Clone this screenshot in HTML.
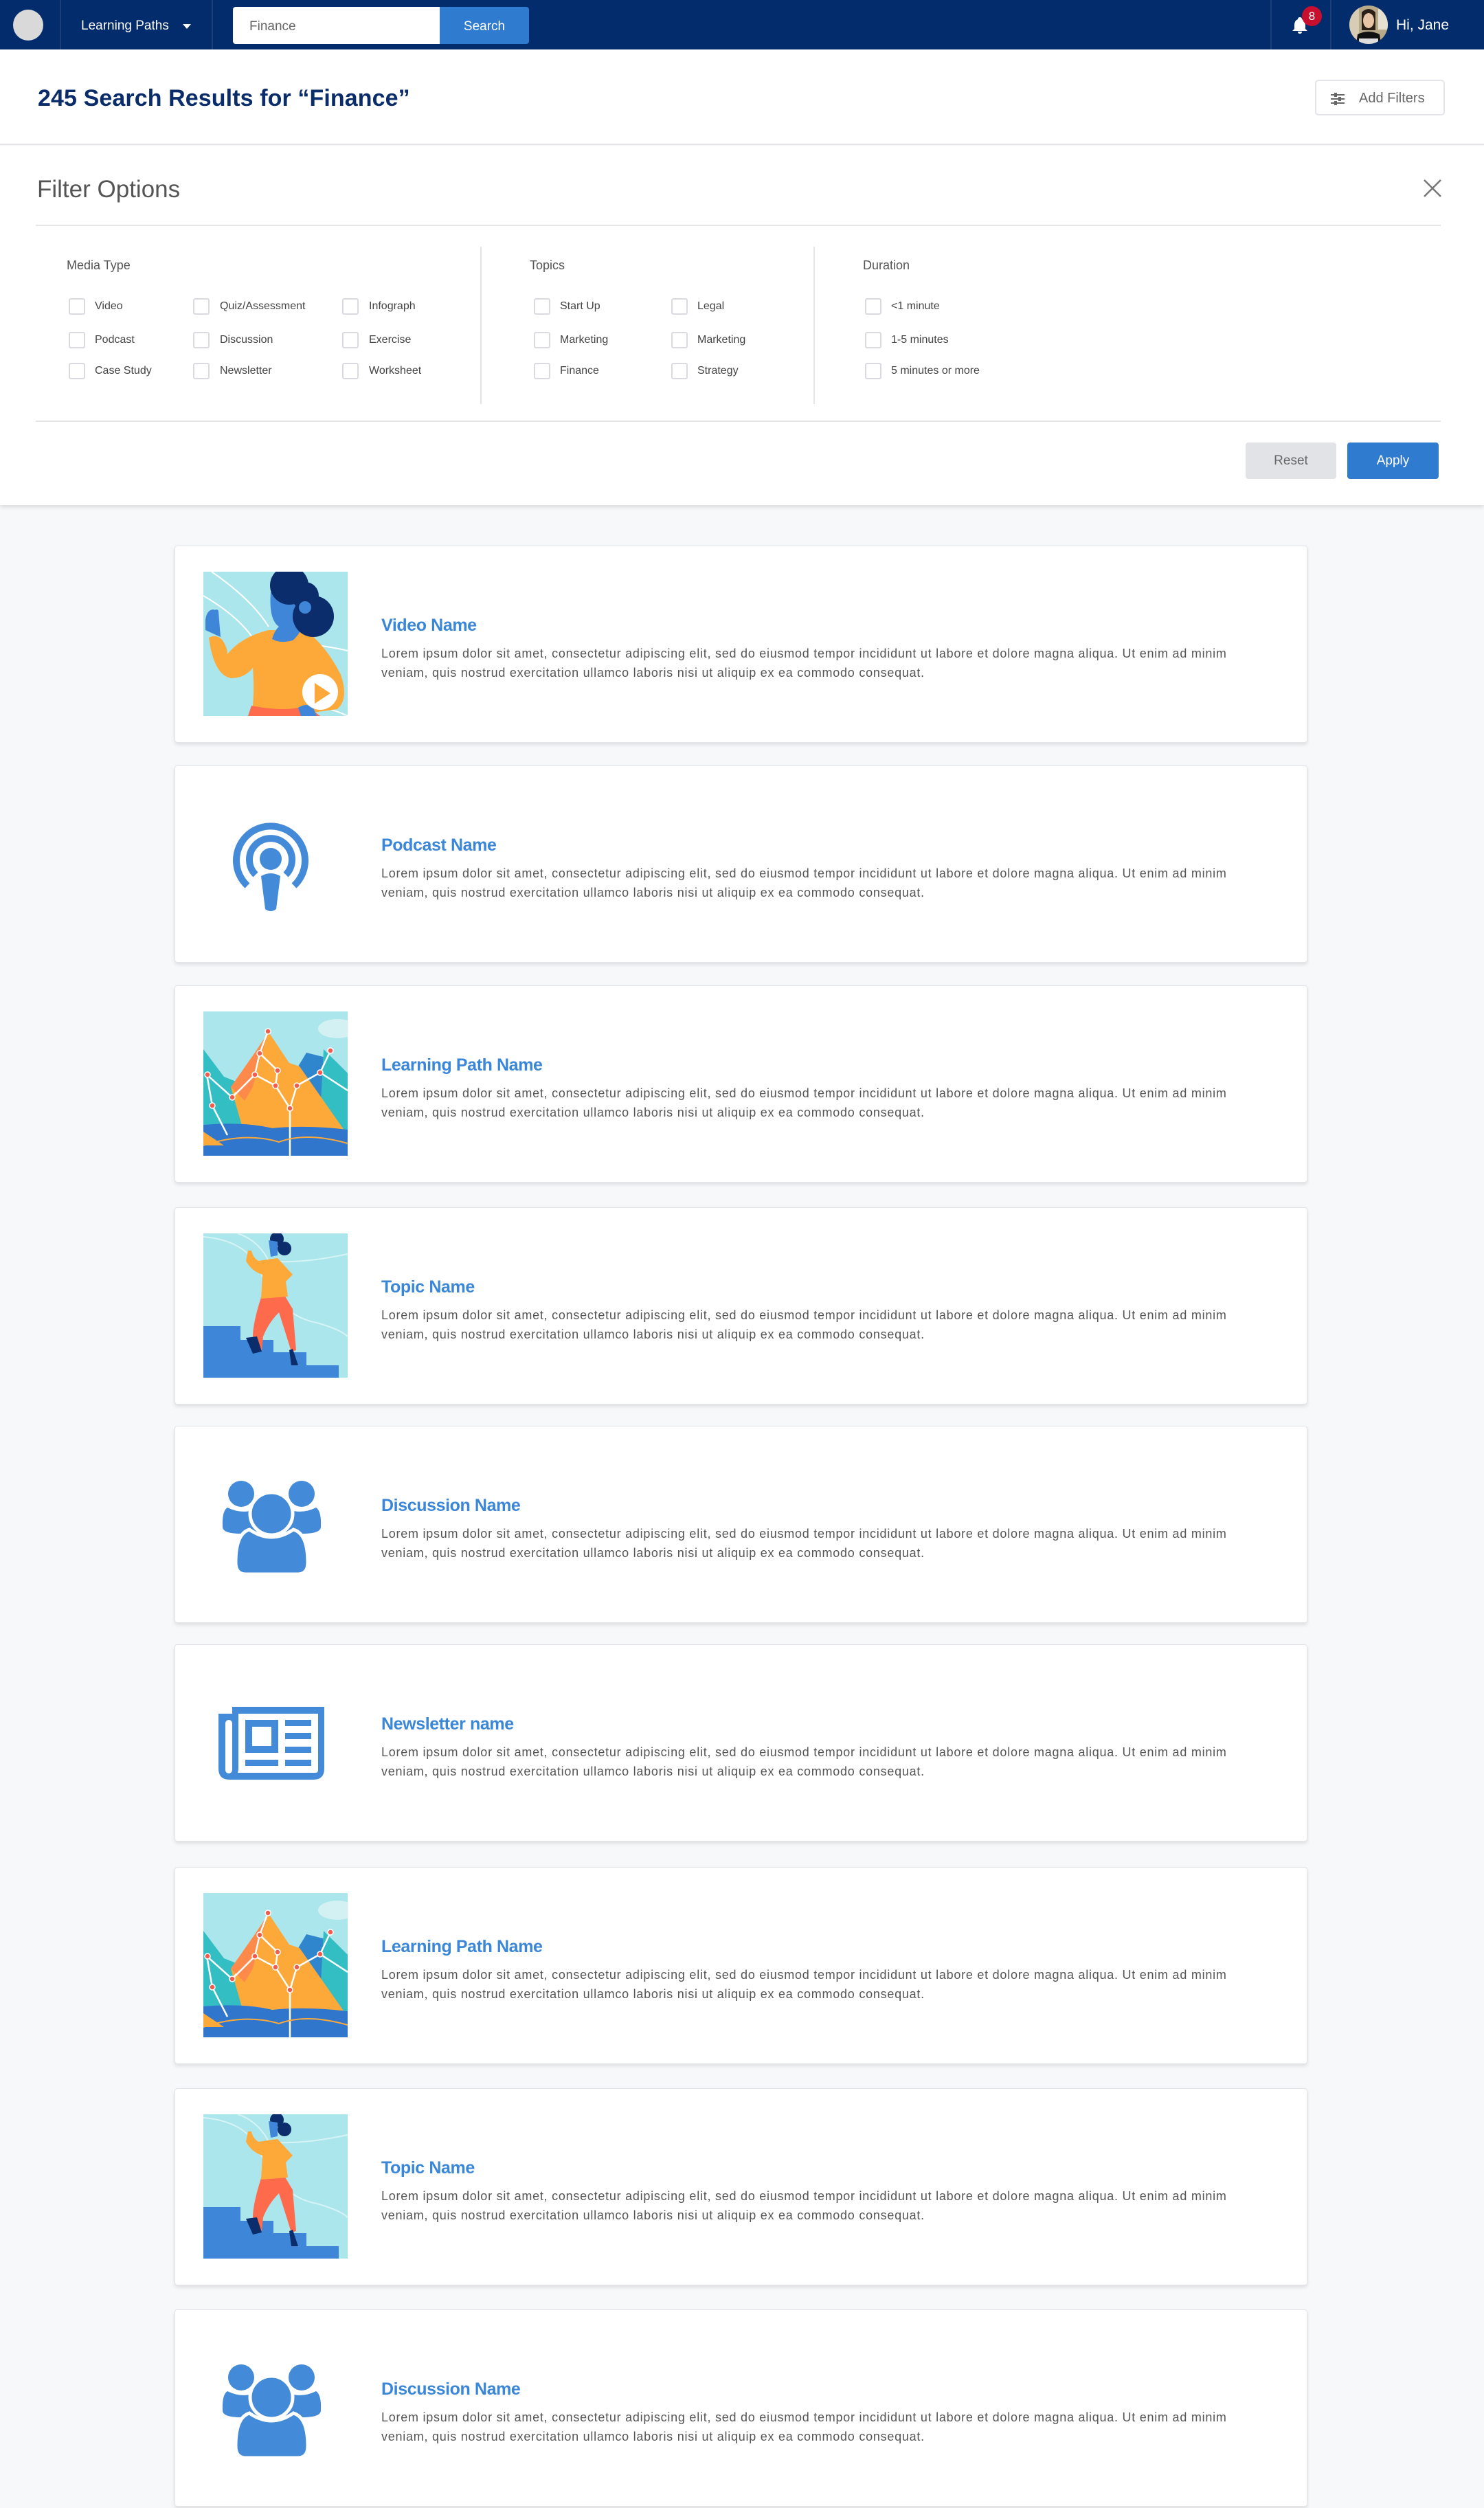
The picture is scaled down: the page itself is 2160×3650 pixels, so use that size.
<!DOCTYPE html>
<html><head><meta charset="utf-8">
<style>
*{margin:0;padding:0;box-sizing:border-box}
body{width:2160px;height:3650px;background:#f7f8fa;font-family:"Liberation Sans",Arial,sans-serif;position:relative;overflow:hidden}
.a{position:absolute}
.nav{left:0;top:0;width:2160px;height:72px;background:#022c6b}
.vd{position:absolute;top:0;width:2px;height:72px;background:#1d3f78}
.hdr{left:0;top:72px;width:2160px;height:139px;background:#fff;border-bottom:2px solid #e6e7ea}
.panel{left:0;top:212px;width:2160px;height:523px;background:#fff;box-shadow:0 3px 6px rgba(0,0,0,.12)}
.cb{position:absolute;width:24px;height:24px;border:2px solid #d9dbe0;border-radius:3px;background:#fff}
.lb{position:absolute;font-size:16px;color:#444;line-height:20px;white-space:nowrap}
.ch{position:absolute;font-size:18px;color:#555;line-height:22px}
.card{position:absolute;left:254px;width:1649px;height:287px;background:#fff;border:1px solid #e3e4e8;border-radius:4px;box-shadow:0 3px 6px rgba(0,0,0,.10)}
.card svg.ill{position:absolute;left:41px;top:37px;width:210px;height:210px}
.card .t{position:absolute;left:300px;top:101px;font-size:25px;color:#3a86d8;font-weight:bold;letter-spacing:-0.4px;white-space:nowrap}
.card .d{position:absolute;left:300px;top:142px;font-size:18px;line-height:28px;color:#555;white-space:nowrap;letter-spacing:0.75px}
</style></head><body>
<svg width="0" height="0" style="position:absolute">
<defs>
<symbol id="video" viewBox="0 0 210 210">
<rect width="210" height="210" fill="#abe6ec"/>
<path d="M12 0 Q70 40 95 80" stroke="#fff" stroke-width="2" fill="none"/>
<path d="M0 35 Q60 70 80 110 M150 105 Q190 110 210 115 M160 195 Q190 200 210 210" stroke="#fff" stroke-width="2" fill="none"/>
<path d="M3 85 L3 70 Q5 55 15 55 L22 58 L25 95 Z" fill="#3f86d8"/>
<rect x="16" y="55" width="6" height="25" rx="3" fill="#3f86d8"/>
<path d="M8 96 Q20 90 28 100 Q35 110 35 120 Q55 95 95 85 L150 86 Q180 110 200 150 Q212 185 195 200 L160 205 L155 210 L70 210 Q75 180 72 140 Q60 155 40 155 Q15 150 8 96 Z" fill="#fda93a"/>
<path d="M98 30 L145 28 L150 70 Q140 92 130 100 Q112 105 100 98 Q104 85 110 80 Q95 70 98 30 Z" fill="#3f86d8"/>
<circle cx="125" cy="20" r="28" fill="#0b2d6b"/>
<circle cx="160" cy="65" r="30" fill="#0b2d6b"/>
<circle cx="148" cy="35" r="20" fill="#0b2d6b"/>
<circle cx="148" cy="52" r="9" fill="#3f86d8"/>
<path d="M70 195 Q120 205 150 195 L170 210 L65 210 Z" fill="#fe6b4c"/>
<path d="M138 198 Q150 190 160 198 L165 210 L142 210 Z" fill="#3f86d8"/>
<circle cx="170" cy="175" r="26" fill="#fff"/>
<path d="M162 162 L185 177 L162 192 Z" fill="#fda93a"/>
</symbol>
<symbol id="mountain" viewBox="0 0 210 210">
<rect width="210" height="210" fill="#abe6ec"/>
<ellipse cx="195" cy="25" rx="28" ry="14" fill="#d3f1f3"/>
<path d="M0 55 L30 95 L55 105 L105 170 L0 180 Z" fill="#33bec3"/>
<path d="M150 60 L190 70 L210 90 L210 190 L130 190 L120 110 Z" fill="#2f86cc"/>
<path d="M175 55 L210 90 L210 180 L170 150 Z" fill="#33bec3"/>
<path d="M40 110 L75 60 L95 30 L125 75 L140 80 L210 180 L60 180 Z" fill="#fda93a"/>
<path d="M40 110 L75 60 L95 30 L82 70 L72 110 L60 130 Z" fill="#fd8a4a"/>
<path d="M0 165 Q60 160 100 170 Q150 165 210 172 L210 210 L0 210 Z" fill="#2f76cc"/>
<path d="M0 175 L30 195 L0 195 Z" fill="#fda93a"/>
<path d="M5 92 L42 125 L75 92 L105 108 L126 141 L126 210 M126 141 L136 108 L170 89 L185 57 M170 89 L210 115 M5 92 L13 137 L35 180 M75 92 L82 61 L94 29 M82 61 L108 86 L105 108 M42 125 L48 118" stroke="#fff" stroke-width="2.5" fill="none"/>
<path d="M0 195 Q60 175 110 190 Q150 175 210 192" stroke="#fda93a" stroke-width="2" fill="none"/>
<g fill="#f25c4d" stroke="#fff" stroke-width="1.5"><circle cx="6" cy="92" r="4"/><circle cx="42" cy="125" r="4"/><circle cx="75" cy="92" r="4"/><circle cx="82" cy="61" r="4"/><circle cx="94" cy="29" r="4"/><circle cx="108" cy="86" r="4"/><circle cx="105" cy="108" r="4"/><circle cx="126" cy="141" r="4"/><circle cx="136" cy="108" r="4"/><circle cx="170" cy="89" r="4"/><circle cx="185" cy="57" r="4"/><circle cx="13" cy="137" r="4"/></g>
</symbol>
<symbol id="topic" viewBox="0 0 210 210">
<rect width="210" height="210" fill="#abe6ec"/>
<path d="M0 5 Q60 10 80 50 Q110 120 165 130 Q200 140 210 150 M50 0 Q80 10 95 40 Q140 45 210 30" stroke="#d6f3f5" stroke-width="2" fill="none"/>
<path d="M0 135 L54 135 L54 155 L102 155 L102 173 L150 173 L150 192 L197 192 L197 210 L0 210 Z" fill="#3e87d8"/>
<path d="M85 90 L115 85 L130 110 L135 170 L128 172 Q115 130 110 115 Q95 130 87 150 L85 170 L75 170 L72 150 Q72 130 85 90 Z" fill="#fe6b4c"/>
<path d="M80 40 L108 36 L130 60 L120 70 L123 92 L84 95 L86 60 Q70 55 62 40 L65 25 L70 25 Q72 35 80 40 Z" fill="#fda93a"/>
<circle cx="107" cy="8" r="10" fill="#0b2d6b"/><circle cx="118" cy="22" r="10" fill="#0b2d6b"/>
<path d="M95 10 L108 12 L108 32 L98 34 Z" fill="#3f86d8"/>
<path d="M62 152 L72 175 L85 172 L78 150 Z M130 168 L138 192 L128 192 L125 170Z" fill="#0b2d6b"/>
</symbol>
<symbol id="podcast" viewBox="0 0 116 134">
<path d="M24 96 A50 50 0 1 1 92 96" stroke="#438ad8" stroke-width="10" fill="none"/>
<path d="M36 80 A31 31 0 1 1 80 80" stroke="#438ad8" stroke-width="10" fill="none"/>
<circle cx="58" cy="57" r="16" fill="#438ad8"/>
<path d="M44 82 Q58 74 72 82 L66 130 Q58 136 50 130 Z" fill="#438ad8"/>
</symbol>
<symbol id="disc" viewBox="0 0 145 137">
<circle cx="28" cy="20" r="19" fill="#438ad8"/><circle cx="116" cy="20" r="19" fill="#438ad8"/>
<path d="M8 40 Q28 50 48 43 L60 75 L28 78 Q1 78 1 68 Q0 45 8 40 Z" fill="#438ad8"/>
<path d="M137 40 Q117 50 97 43 L85 75 L117 78 Q144 78 144 68 Q145 45 137 40 Z" fill="#438ad8"/>
<circle cx="72" cy="49" r="31" fill="#438ad8" stroke="#fff" stroke-width="5"/>
<path d="M40 72 Q72 94 104 72 Q125 78 125 120 Q125 137 110 137 L35 137 Q20 137 20 120 Q20 78 40 72 Z" fill="#438ad8" stroke="#fff" stroke-width="5"/>
</symbol>
<symbol id="news" viewBox="0 0 154 106">
<path d="M20 0 L154 0 L154 90 Q154 106 138 106 L16 106 Q0 106 0 90 L0 10 L20 10 Z" fill="#438ad8"/>
<rect x="10" y="19" width="10" height="78" rx="5" fill="#fff"/>
<path d="M29 10 L145 10 L145 92 Q145 96 141 96 L28 96 Q29 93 29 90 Z" fill="#fff"/>
<rect x="39" y="19" width="48" height="48" fill="#438ad8"/><rect x="49" y="29" width="28" height="28" fill="#fff"/>
<g fill="#438ad8"><rect x="97" y="19" width="38" height="9"/><rect x="97" y="38" width="38" height="9"/><rect x="97" y="58" width="38" height="9"/><rect x="97" y="77" width="38" height="9"/><rect x="39" y="77" width="48" height="9"/></g>
</symbol>
</defs></svg>

<div class="a nav">
  <div class="a" style="left:19px;top:14px;width:44px;height:45px;border-radius:50%;background:#d9d9d9"></div>
  <div class="vd" style="left:87px"></div>
  <div class="a" style="left:118px;top:27px;font-size:19px;color:#fff;white-space:nowrap">Learning Paths</div>
  <div class="a" style="left:266px;top:35px;width:0;height:0;border-left:6px solid transparent;border-right:6px solid transparent;border-top:7px solid #fff"></div>
  <div class="vd" style="left:308px"></div>
  <div class="a" style="left:339px;top:10px;width:301px;height:54px;background:#fff;border-radius:4px 0 0 4px;font-size:19px;color:#666;padding:18px 0 0 24px">Finance</div>
  <div class="a" style="left:640px;top:10px;width:130px;height:54px;background:#2f7bd0;border-radius:0 4px 4px 0;font-size:19px;color:#fff;text-align:center;padding-top:18px">Search</div>
  <div class="vd" style="left:1849px"></div>
  <svg class="a" style="left:1880px;top:24px" width="24" height="26" viewBox="0 0 24 26"><path d="M12 1 Q15 1 15 4 Q20 6 20 13 L20 18 L23 21 L1 21 L4 18 L4 13 Q4 6 9 4 Q9 1 12 1 Z M9 22 L15 22 Q15 25 12 25 Q9 25 9 22Z" fill="#fff"/></svg>
  <div class="a" style="left:1895px;top:9px;width:29px;height:29px;border-radius:50%;background:#c8102e;color:#fff;font-size:17px;text-align:center;line-height:29px">8</div>
  <div class="vd" style="left:1936px"></div>
  <svg class="a" style="left:1964px;top:8px" width="56" height="56" viewBox="0 0 56 56"><clipPath id="av"><circle cx="28" cy="28" r="28"/></clipPath><g clip-path="url(#av)"><rect width="56" height="56" fill="#b8a98a"/><rect x="0" y="0" width="14" height="56" fill="#d8cdb4"/><rect x="42" y="5" width="14" height="30" fill="#e6e0d2"/><path d="M18 10 Q28 0 38 10 L38 36 L18 36Z" fill="#2a2018"/><ellipse cx="28" cy="22" rx="8" ry="11" fill="#e8c4a6"/><path d="M10 56 L12 42 Q28 34 44 42 L46 56Z" fill="#111"/><rect x="14" y="48" width="28" height="8" fill="#ddd"/></g></svg>
  <div class="a" style="left:2032px;top:25px;font-size:21px;color:#fff;white-space:nowrap">Hi, Jane</div>
</div>

<div class="a hdr">
  <div class="a" style="left:55px;top:52px;font-size:34px;font-weight:bold;color:#0a2c6b;letter-spacing:0.1px;white-space:nowrap">245 Search Results for “Finance”</div>
  <div class="a" style="left:1914px;top:44px;width:189px;height:52px;border:2px solid #e3e5ea;border-radius:5px;background:#fff">
    <svg class="a" style="left:21px;top:16px" width="20" height="20" viewBox="0 0 20 20"><g stroke="#666" stroke-width="2"><line x1="0" y1="4" x2="20" y2="4"/><line x1="0" y1="10" x2="20" y2="10"/><line x1="0" y1="16" x2="20" y2="16"/></g><g fill="#666"><rect x="5" y="1" width="4" height="6"/><rect x="11" y="7" width="4" height="6"/><rect x="5" y="13" width="4" height="6"/></g></svg>
    <div class="a" style="left:62px;top:14px;font-size:20px;color:#666;white-space:nowrap">Add Filters</div>
  </div>
</div>

<div class="a panel">
  <div class="a" style="left:54px;top:44px;font-size:35px;color:#555;white-space:nowrap">Filter Options</div>
  <svg class="a" style="left:2071px;top:48px" width="28" height="28" viewBox="0 0 28 28"><path d="M2 2 L26 26 M26 2 L2 26" stroke="#777" stroke-width="2.5"/></svg>
  <div class="a" style="left:52px;top:115px;width:2045px;height:2px;background:#e4e5e8"></div>
  <div class="a" style="left:699px;top:147px;width:2px;height:229px;background:#e4e5e8"></div>
  <div class="a" style="left:1184px;top:147px;width:2px;height:229px;background:#e4e5e8"></div>
  <div class="ch" style="left:97px;top:163px">Media Type</div>
  <div class="ch" style="left:771px;top:163px">Topics</div>
  <div class="ch" style="left:1256px;top:163px">Duration</div>

  <div class="cb" style="left:100px;top:222px"></div><div class="lb" style="left:138px;top:224px">Video</div>
  <div class="cb" style="left:281px;top:222px"></div><div class="lb" style="left:320px;top:224px">Quiz/Assessment</div>
  <div class="cb" style="left:498px;top:222px"></div><div class="lb" style="left:537px;top:224px">Infograph</div>
  <div class="cb" style="left:100px;top:271px"></div><div class="lb" style="left:138px;top:273px">Podcast</div>
  <div class="cb" style="left:281px;top:271px"></div><div class="lb" style="left:320px;top:273px">Discussion</div>
  <div class="cb" style="left:498px;top:271px"></div><div class="lb" style="left:537px;top:273px">Exercise</div>
  <div class="cb" style="left:100px;top:316px"></div><div class="lb" style="left:138px;top:318px">Case Study</div>
  <div class="cb" style="left:281px;top:316px"></div><div class="lb" style="left:320px;top:318px">Newsletter</div>
  <div class="cb" style="left:498px;top:316px"></div><div class="lb" style="left:537px;top:318px">Worksheet</div>

  <div class="cb" style="left:777px;top:222px"></div><div class="lb" style="left:815px;top:224px">Start Up</div>
  <div class="cb" style="left:977px;top:222px"></div><div class="lb" style="left:1015px;top:224px">Legal</div>
  <div class="cb" style="left:777px;top:271px"></div><div class="lb" style="left:815px;top:273px">Marketing</div>
  <div class="cb" style="left:977px;top:271px"></div><div class="lb" style="left:1015px;top:273px">Marketing</div>
  <div class="cb" style="left:777px;top:316px"></div><div class="lb" style="left:815px;top:318px">Finance</div>
  <div class="cb" style="left:977px;top:316px"></div><div class="lb" style="left:1015px;top:318px">Strategy</div>

  <div class="cb" style="left:1259px;top:222px"></div><div class="lb" style="left:1297px;top:224px">&lt;1 minute</div>
  <div class="cb" style="left:1259px;top:271px"></div><div class="lb" style="left:1297px;top:273px">1-5 minutes</div>
  <div class="cb" style="left:1259px;top:316px"></div><div class="lb" style="left:1297px;top:318px">5 minutes or more</div>

  <div class="a" style="left:52px;top:400px;width:2045px;height:2px;background:#e4e5e8"></div>
  <div class="a" style="left:1813px;top:432px;width:132px;height:53px;background:#e2e3e6;border-radius:4px;font-size:19px;color:#666;text-align:center;line-height:53px">Reset</div>
  <div class="a" style="left:1961px;top:432px;width:133px;height:53px;background:#2f7bd0;border-radius:4px;font-size:19px;color:#fff;text-align:center;line-height:53px">Apply</div>
</div>

<div class="card" style="top:794px"><svg class="ill"><use href="#video"/></svg><div class="t">Video Name</div><div class="d">Lorem ipsum dolor sit amet, consectetur adipiscing elit, sed do eiusmod tempor incididunt ut labore et dolore magna aliqua. Ut enim ad minim<br>veniam, quis nostrud exercitation ullamco laboris nisi ut aliquip ex ea commodo consequat.</div></div>
<div class="card" style="top:1114px"><svg class="a" style="left:81px;top:78px" width="116" height="134"><use href="#podcast"/></svg><div class="t">Podcast Name</div><div class="d">Lorem ipsum dolor sit amet, consectetur adipiscing elit, sed do eiusmod tempor incididunt ut labore et dolore magna aliqua. Ut enim ad minim<br>veniam, quis nostrud exercitation ullamco laboris nisi ut aliquip ex ea commodo consequat.</div></div>
<div class="card" style="top:1434px"><svg class="ill"><use href="#mountain"/></svg><div class="t">Learning Path Name</div><div class="d">Lorem ipsum dolor sit amet, consectetur adipiscing elit, sed do eiusmod tempor incididunt ut labore et dolore magna aliqua. Ut enim ad minim<br>veniam, quis nostrud exercitation ullamco laboris nisi ut aliquip ex ea commodo consequat.</div></div>
<div class="card" style="top:1757px"><svg class="ill"><use href="#topic"/></svg><div class="t">Topic Name</div><div class="d">Lorem ipsum dolor sit amet, consectetur adipiscing elit, sed do eiusmod tempor incididunt ut labore et dolore magna aliqua. Ut enim ad minim<br>veniam, quis nostrud exercitation ullamco laboris nisi ut aliquip ex ea commodo consequat.</div></div>
<div class="card" style="top:2075px"><svg class="a" style="left:68px;top:78px" width="145" height="137"><use href="#disc"/></svg><div class="t">Discussion Name</div><div class="d">Lorem ipsum dolor sit amet, consectetur adipiscing elit, sed do eiusmod tempor incididunt ut labore et dolore magna aliqua. Ut enim ad minim<br>veniam, quis nostrud exercitation ullamco laboris nisi ut aliquip ex ea commodo consequat.</div></div>
<div class="card" style="top:2393px"><svg class="a" style="left:63px;top:90px" width="154" height="106"><use href="#news"/></svg><div class="t">Newsletter name</div><div class="d">Lorem ipsum dolor sit amet, consectetur adipiscing elit, sed do eiusmod tempor incididunt ut labore et dolore magna aliqua. Ut enim ad minim<br>veniam, quis nostrud exercitation ullamco laboris nisi ut aliquip ex ea commodo consequat.</div></div>
<div class="card" style="top:2717px"><svg class="ill"><use href="#mountain"/></svg><div class="t">Learning Path Name</div><div class="d">Lorem ipsum dolor sit amet, consectetur adipiscing elit, sed do eiusmod tempor incididunt ut labore et dolore magna aliqua. Ut enim ad minim<br>veniam, quis nostrud exercitation ullamco laboris nisi ut aliquip ex ea commodo consequat.</div></div>
<div class="card" style="top:3039px"><svg class="ill"><use href="#topic"/></svg><div class="t">Topic Name</div><div class="d">Lorem ipsum dolor sit amet, consectetur adipiscing elit, sed do eiusmod tempor incididunt ut labore et dolore magna aliqua. Ut enim ad minim<br>veniam, quis nostrud exercitation ullamco laboris nisi ut aliquip ex ea commodo consequat.</div></div>
<div class="card" style="top:3361px"><svg class="a" style="left:68px;top:78px" width="145" height="137"><use href="#disc"/></svg><div class="t">Discussion Name</div><div class="d">Lorem ipsum dolor sit amet, consectetur adipiscing elit, sed do eiusmod tempor incididunt ut labore et dolore magna aliqua. Ut enim ad minim<br>veniam, quis nostrud exercitation ullamco laboris nisi ut aliquip ex ea commodo consequat.</div></div>
</body></html>
